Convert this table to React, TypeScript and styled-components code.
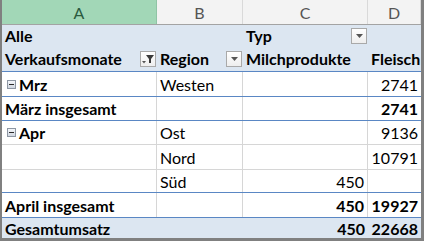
import React from 'react'
import styled, { createGlobalStyle } from 'styled-components'

const GlobalStyle = createGlobalStyle`
  html, body {
    margin: 0;
    padding: 0;
    background: #ffffff;
  }
`

const COLS = '155px 86px 125px 53px'
const BLUE_LINE = '#5a87c4'
const GRID = '#d6d6d6'
const PIVOT_FILL = '#dce6f1'

const Frame = styled.div`
  width: 424px;
  height: 241px;
  box-sizing: border-box;
  border-left: 2px solid #808080;
  border-right: 3px solid #808080;
  border-bottom: 3px solid #808080;
  overflow: hidden;
  background: #ffffff;
  font-family: Lato, 'Liberation Sans', sans-serif;
  font-size: 16px;
  color: #000000;
`

const ColHeaderRow = styled.div`
  display: grid;
  grid-template-columns: ${COLS};
  height: 25px;
  box-sizing: border-box;
  border-bottom: 1px solid #a3a3a3;
`

const ColLetter = styled.div<{ $active?: boolean }>`
  display: flex;
  align-items: center;
  justify-content: center;
  box-sizing: border-box;
  border-right: 1px solid ${(p) => (p.$active ? '#8fc4a5' : '#d9d9d9')};
  background: ${(p) => (p.$active ? '#a2d7b7' : '#f3f3f3')};
  color: ${(p) => (p.$active ? '#2b5a3f' : '#555555')};
  font-size: 16px;
  padding-top: 1px;
`

type Line = 'grid' | 'blue' | 'none'

const Row = styled.div<{ $h: number; $fill?: boolean; $line?: Line; $top?: boolean }>`
  display: grid;
  grid-template-columns: ${COLS};
  height: ${(p) => p.$h}px;
  box-sizing: border-box;
  background: ${(p) => (p.$fill ? PIVOT_FILL : '#ffffff')};
  border-top: ${(p) => (p.$top ? `1px solid ${BLUE_LINE}` : 'none')};
  border-bottom: ${(p) =>
    p.$line === 'blue' ? `1px solid ${BLUE_LINE}` : p.$line === 'grid' ? `1px solid ${GRID}` : 'none'};
`

const Cell = styled.div<{ $right?: boolean; $bold?: boolean; $grid?: boolean }>`
  display: flex;
  align-items: center;
  justify-content: ${(p) => (p.$right ? 'flex-end' : 'flex-start')};
  gap: 3px;
  box-sizing: border-box;
  padding: 0 3px 0 3px;
  font-weight: ${(p) => (p.$bold ? 700 : 400)};
  border-right: ${(p) => (p.$grid ? `1px solid ${GRID}` : 'none')};
  white-space: nowrap;
  overflow: hidden;
  min-width: 0;
`

const HeadCell = styled(Cell)`
  justify-content: space-between;
  padding-right: 1px;
`

const DropButton = styled.span`
  flex: none;
  width: 16px;
  height: 16px;
  box-sizing: border-box;
  border: 1px solid #a9a9a9;
  background: linear-gradient(#ffffff, #eeeeee);
  display: flex;
  align-items: center;
  justify-content: center;
`

const Toggle = styled.span`
  flex: none;
  width: 9px;
  height: 9px;
  margin-left: 2px;
  box-sizing: border-box;
  border: 1px solid #8d96a3;
  background: linear-gradient(#f4f6fa, #cfd6e0);
  display: flex;
  align-items: center;
  justify-content: center;
  &::after {
    content: '';
    width: 5px;
    height: 1px;
    background: #2a2a2a;
  }
`

const Arrow = () => (
  <svg width="7" height="4" viewBox="0 0 7 4">
    <path d="M0 0 L7 0 L3.5 4 Z" fill="#555555" />
  </svg>
)

const Funnel = () => (
  <svg width="12" height="10" viewBox="0 0 12 10">
    <path d="M4 1 L12 1 L9 5 L9 9 L7 9 L7 5 Z" fill="#3a3a3a" />
    <path d="M0 7 L4 7 L2 9.5 Z" fill="#555555" />
  </svg>
)

export default function App() {
  return (
    <>
      <GlobalStyle />
      <Frame>
        <ColHeaderRow>
          <ColLetter $active>A</ColLetter>
          <ColLetter>B</ColLetter>
          <ColLetter>C</ColLetter>
          <ColLetter>D</ColLetter>
        </ColHeaderRow>

        <Row $h={21} $fill>
          <Cell $bold>Alle</Cell>
          <Cell />
          <HeadCell $bold>
            Typ
            <DropButton>
              <Arrow />
            </DropButton>
          </HeadCell>
          <Cell />
        </Row>
        <Row $h={26} $fill $line="blue">
          <HeadCell $bold>
            Verkaufsmonate
            <DropButton>
              <Funnel />
            </DropButton>
          </HeadCell>
          <HeadCell $bold>
            Region
            <DropButton>
              <Arrow />
            </DropButton>
          </HeadCell>
          <Cell $bold>Milchprodukte</Cell>
          <Cell $bold>Fleisch</Cell>
        </Row>

        <Row $h={25} $line="blue">
          <Cell $bold $grid>
            <Toggle />
            Mrz
          </Cell>
          <Cell $grid>Westen</Cell>
          <Cell $grid />
          <Cell $right>2741</Cell>
        </Row>
        <Row $h={24} $line="blue">
          <Cell $bold $grid>März insgesamt</Cell>
          <Cell $grid />
          <Cell $grid />
          <Cell $right $bold>2741</Cell>
        </Row>
        <Row $h={24} $line="grid">
          <Cell $bold $grid>
            <Toggle />
            Apr
          </Cell>
          <Cell $grid>Ost</Cell>
          <Cell $grid />
          <Cell $right>9136</Cell>
        </Row>
        <Row $h={25} $line="grid">
          <Cell $grid />
          <Cell $grid>Nord</Cell>
          <Cell $grid />
          <Cell $right>10791</Cell>
        </Row>
        <Row $h={23} $line="blue">
          <Cell $grid />
          <Cell $grid>Süd</Cell>
          <Cell $grid $right>450</Cell>
          <Cell />
        </Row>
        <Row $h={24}>
          <Cell $bold $grid>April insgesamt</Cell>
          <Cell $grid />
          <Cell $grid $right $bold>450</Cell>
          <Cell $right $bold>19927</Cell>
        </Row>
        <Row $h={21} $fill $top>
          <Cell $bold>Gesamtumsatz</Cell>
          <Cell />
          <Cell $right $bold>450</Cell>
          <Cell $right $bold>22668</Cell>
        </Row>
      </Frame>
    </>
  )
}
